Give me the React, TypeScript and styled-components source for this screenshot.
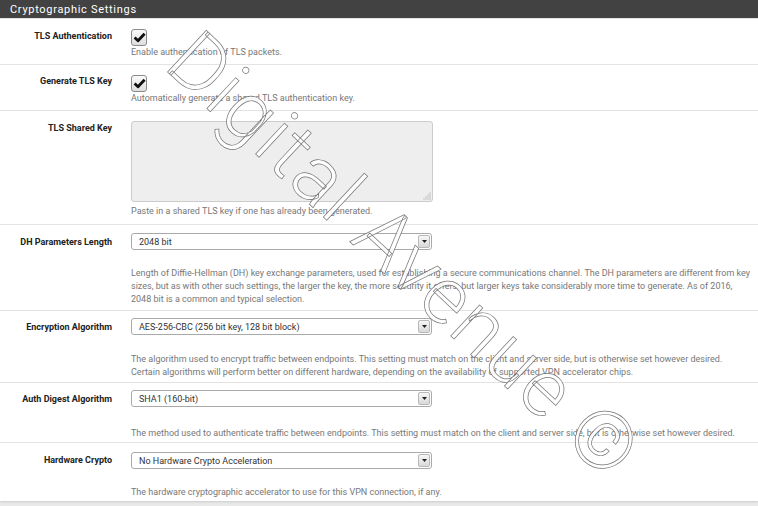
import React from 'react'
import styled, { createGlobalStyle } from 'styled-components'

const GlobalStyle = createGlobalStyle`
  html, body {
    margin: 0;
    padding: 0;
    background: #e9e9e9;
    font-family: Roboto, 'Liberation Sans', sans-serif;
  }
`

const Page = styled.div`
  position: relative;
  width: 758px;
  height: 506px;
  overflow: hidden;
  background: #e9e9e9;
`

const Panel = styled.div`
  background: #ffffff;
  box-shadow: 0 1px 2px rgba(0, 0, 0, 0.12);
`

const PanelHeading = styled.div`
  height: 18px;
  display: flex;
  align-items: center;
  padding-left: 10px;
  background: #424242;
  color: #ffffff;
  font-size: 11px;
  letter-spacing: 0.7px;
`

const Row = styled.div<{ $padTop: number; $padBottom: number }>`
  display: flex;
  align-items: flex-start;
  padding: ${props => props.$padTop}px 0 ${props => props.$padBottom}px;
  border-top: 1px solid #e3e3e3;

  &:first-of-type {
    border-top: none;
  }
`

const Label = styled.div<{ $offset: number }>`
  width: 112px;
  flex: none;
  margin-top: ${props => props.$offset}px;
  text-align: right;
  font-size: 9px;
  font-weight: 700;
  line-height: 12px;
  color: #222222;
`

const Control = styled.div`
  flex: 1;
  margin-left: 19px;
  display: flex;
  flex-direction: column;
  align-items: flex-start;
`

const HelpText = styled.div<{ $gap: number }>`
  margin-top: ${props => props.$gap}px;
  font-size: 9px;
  line-height: 13px;
  color: #777777;
  white-space: nowrap;
`

const CheckBox = styled.span`
  width: 14px;
  height: 15px;
  border: 1px solid #8a8a8a;
  border-radius: 3px;
  background: linear-gradient(#fafafa, #dedede);
  display: flex;
  align-items: center;
  justify-content: center;
`

const KeyWrap = styled.div`
  position: relative;
  width: 302px;
  height: 81px;
`

const KeyArea = styled.textarea`
  box-sizing: border-box;
  display: block;
  width: 100%;
  height: 100%;
  margin: 0;
  resize: none;
  background: #eeeeee;
  border: 1px solid #cccccc;
  border-radius: 3px;
  font-family: inherit;
  font-size: 9px;
`

const Grip = styled.svg`
  position: absolute;
  right: 2px;
  bottom: 2px;
`

const Select = styled.div`
  box-sizing: border-box;
  width: 301px;
  height: 17px;
  display: flex;
  align-items: center;
  justify-content: space-between;
  padding: 0 1px 0 7px;
  border: 1px solid #a9a9a9;
  border-radius: 3px;
  background: #ffffff;
  font-size: 9px;
  color: #333333;
`

const SelectButton = styled.span`
  box-sizing: border-box;
  width: 12px;
  height: 13px;
  display: flex;
  align-items: center;
  justify-content: center;
  border: 1px solid #b8b8b8;
  border-radius: 2px;
  background: linear-gradient(#f7f7f7, #d9d9d9);
`

const Watermark = styled.div`
  position: absolute;
  left: 208px;
  top: 18px;
  transform: rotate(43deg);
  transform-origin: 0 0;
  font-family: Roboto, 'Liberation Sans', sans-serif;
  font-size: 80px;
  font-weight: 300;
  line-height: 1;
  letter-spacing: 2px;
  white-space: nowrap;
  color: rgba(255, 255, 255, 0.88);
  -webkit-text-stroke: 0.7px rgba(70, 70, 70, 0.75);
  pointer-events: none;
`

const Check = () => (
  <svg width="13" height="11" viewBox="0 0 13 11">
    <path d="M1.6 5.6 L5 8.8 L11.6 1.8" fill="none" stroke="#111" strokeWidth="2.8" strokeLinejoin="round" />
  </svg>
)

const DropDown: React.FC<{ value: string }> = ({ value }) => (
  <Select>
    <span>{value}</span>
    <SelectButton>
      <svg width="5" height="3" viewBox="0 0 5 3">
        <path d="M0 0 H5 L2.5 3 Z" fill="#222" />
      </svg>
    </SelectButton>
  </Select>
)

const gripDots = [
  [7, 1],
  [7, 3],
  [5, 3],
  [7, 5],
  [5, 5],
  [3, 5],
  [7, 7],
  [5, 7],
  [3, 7],
  [1, 7],
]

export default function App() {
  return (
    <Page>
      <GlobalStyle />
      <Panel>
        <PanelHeading>Cryptographic Settings</PanelHeading>

        <Row $padTop={10} $padBottom={5}>
          <Label $offset={1}>TLS Authentication</Label>
          <Control>
            <CheckBox>
              <Check />
            </CheckBox>
            <HelpText $gap={0}>Enable authentication of TLS packets.</HelpText>
          </Control>
        </Row>

        <Row $padTop={10} $padBottom={5}>
          <Label $offset={0}>Generate TLS Key</Label>
          <Control>
            <CheckBox>
              <Check />
            </CheckBox>
            <HelpText $gap={0}>Automatically generate a shared TLS authentication key.</HelpText>
          </Control>
        </Row>

        <Row $padTop={10} $padBottom={6}>
          <Label $offset={1}>TLS Shared Key</Label>
          <Control>
            <KeyWrap>
              <KeyArea readOnly />
              <Grip width="8" height="8" viewBox="0 0 8 8">
                {gripDots.map(([x, y]) => (
                  <rect key={`${x}-${y}`} x={x - 0.5} y={y - 0.5} width="1" height="1" fill="#9a9a9a" />
                ))}
              </Grip>
            </KeyWrap>
            <HelpText $gap={3}>Paste in a shared TLS key if one has already been generated.</HelpText>
          </Control>
        </Row>

        <Row $padTop={8} $padBottom={4}>
          <Label $offset={3}>DH Parameters Length</Label>
          <Control>
            <DropDown value="2048 bit" />
            <HelpText $gap={17}>
              Length of Diffie-Hellman (DH) key exchange parameters, used for establishing a secure communications
              channel. The DH parameters are different from key
              <br />
              sizes, but as with other such settings, the larger the key, the more security it offers, but larger keys
              take considerably more time to generate. As of 2016,
              <br />
              2048 bit is a common and typical selection.
            </HelpText>
          </Control>
        </Row>

        <Row $padTop={7} $padBottom={3}>
          <Label $offset={3}>Encryption Algorithm</Label>
          <Control>
            <DropDown value="AES-256-CBC (256 bit key, 128 bit block)" />
            <HelpText $gap={18}>
              The algorithm used to encrypt traffic between endpoints. This setting must match on the client and server
              side, but is otherwise set however desired.
              <br />
              Certain algorithms will perform better on different hardware, depending on the availability of supported
              VPN accelerator chips.
            </HelpText>
          </Control>
        </Row>

        <Row $padTop={7} $padBottom={2}>
          <Label $offset={3}>Auth Digest Algorithm</Label>
          <Control>
            <DropDown value="SHA1 (160-bit)" />
            <HelpText $gap={20}>
              The method used to authenticate traffic between endpoints. This setting must match on the client and
              server side, but is otherwise set however desired.
            </HelpText>
          </Control>
        </Row>

        <Row $padTop={9} $padBottom={2}>
          <Label $offset={2}>Hardware Crypto</Label>
          <Control>
            <DropDown value="No Hardware Crypto Acceleration" />
            <HelpText $gap={17}>The hardware cryptographic accelerator to use for this VPN connection, if any.</HelpText>
          </Control>
        </Row>
      </Panel>
      <Watermark>Digital Avenue ©</Watermark>
    </Page>
  )
}
